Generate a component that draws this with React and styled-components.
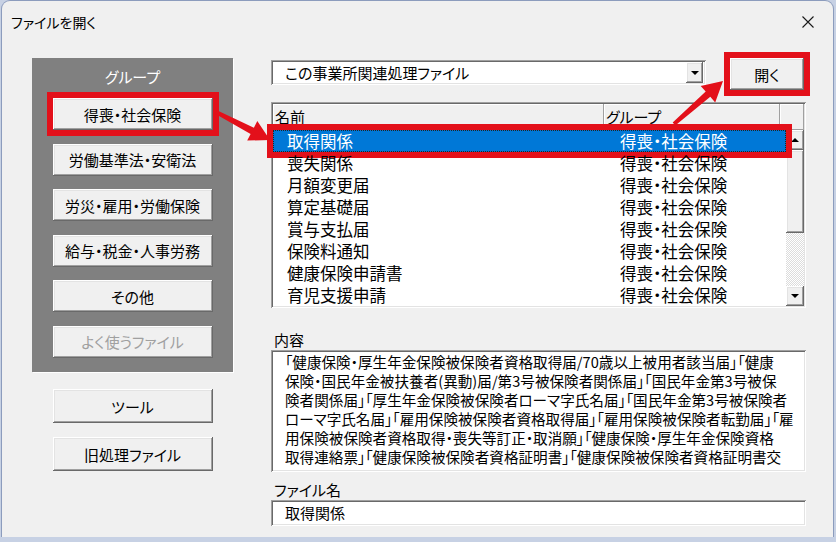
import React from 'react';
import styled, { createGlobalStyle, css } from 'styled-components';

const GlobalStyle = createGlobalStyle`
  html, body {
    margin: 0;
    padding: 0;
  }
  body {
    background: #c7d1e4;
    font-family: "Noto Sans CJK JP", "Noto Sans", sans-serif;
  }
`;

const RED = '#e3101a';

const raised = css`
  box-shadow:
    inset -1px -1px 0 #696969,
    inset 1px 1px 0 #fff,
    inset -2px -2px 0 #a0a0a0,
    inset 2px 2px 0 #e3e3e3;
`;

const sunken = css`
  box-shadow:
    inset 1px 1px 0 #a0a0a0,
    inset -1px -1px 0 #fff,
    inset 2px 2px 0 #696969,
    inset -2px -2px 0 #e3e3e3;
`;

const names = ['取得関係', '喪失関係', '月額変更届', '算定基礎届', '賞与支払届', '保険料通知', '健康保険申請書', '育児支援申請'];

const groups = ['得喪・社会保険', '労働基準法・安衛法', '労災・雇用・労働保険', '給与・税金・人事労務', 'その他'];

const contentLines = [
  '「健康保険・厚生年金保険被保険者資格取得届/70歳以上被用者該当届」「健康',
  '保険・国民年金被扶養者(異動)届/第3号被保険者関係届」「国民年金第3号被保',
  '険者関係届」「厚生年金保険被保険者ローマ字氏名届」「国民年金第3号被保険者',
  'ローマ字氏名届」「雇用保険被保険者資格取得届」「雇用保険被保険者転勤届」「雇',
  '用保険被保険者資格取得・喪失等訂正・取消願」「健康保険・厚生年金保険資格',
  '取得連絡票」「健康保険被保険者資格証明書」「健康保険被保険者資格証明書交',
];

// polygon for a fat annotation arrow from (x1,y1) to the tip (x2,y2)
const arrowPoints = (x1, y1, x2, y2) => {
  const dx = x2 - x1, dy = y2 - y1, len = Math.hypot(dx, dy);
  const ux = dx / len, uy = dy / len, px = -uy, py = ux;
  const headLen = 20, head = 11, tail = 2, neck = 3.5;
  const bx = x2 - ux * headLen, by = y2 - uy * headLen;
  const pts = [
    [x1 + px * tail, y1 + py * tail],
    [bx + px * neck, by + py * neck],
    [bx + px * head, by + py * head],
    [x2, y2],
    [bx - px * head, by - py * head],
    [bx - px * neck, by - py * neck],
    [x1 - px * tail, y1 - py * tail],
  ];
  return pts.map(p => p.map(v => v.toFixed(1)).join(',')).join(' ');
};

export default function App() {
  return (
    <>
      <GlobalStyle />
      <Window>
        <TitleBar>
          <Title>ファイルを開く</Title>
          <CloseIcon viewBox="0 0 12 12">
            <path d="M0.5 0.5 L11.5 11.5 M11.5 0.5 L0.5 11.5" />
          </CloseIcon>
        </TitleBar>

        <Body>
          <LeftColumn>
            <GroupPanel>
              <GroupLabel>グループ</GroupLabel>
              {groups.map((g, i) => (
                <Button key={g} $marked={i === 0}>{g}</Button>
              ))}
              <Button disabled>よく使うファイル</Button>
            </GroupPanel>

            <ToolButtons>
              <Button $h={34}>ツール</Button>
              <Button $h={34}>旧処理ファイル</Button>
            </ToolButtons>
          </LeftColumn>

          <RightColumn>
            <TopRow>
              <Combo>
                <ComboText>この事業所関連処理ファイル</ComboText>
                <ComboButton>
                  <Triangle $down />
                </ComboButton>
              </Combo>
              <Button $w={74} $marked>開く</Button>
            </TopRow>

            <ListBox>
              <ListHeader>
                <HeaderCell $w={331}>名前</HeaderCell>
                <HeaderCell $w={176}>グループ</HeaderCell>
                <HeaderCell $w={24} />
              </ListHeader>
              <ListBody>
                <Rows>
                  {names.map((n, i) => (
                    <Row key={n} $selected={i === 0}>
                      <NameCell>{n}</NameCell>
                      <GroupCell>得喪・社会保険</GroupCell>
                    </Row>
                  ))}
                </Rows>
                <ScrollBar>
                  <ScrollButton><Triangle /></ScrollButton>
                  <Thumb />
                  <Track />
                  <ScrollButton><Triangle $down /></ScrollButton>
                </ScrollBar>
              </ListBody>
            </ListBox>

            <FieldLabel $top={22}>内容</FieldLabel>
            <ContentBox>
              {contentLines.map(line => (
                <ContentLine key={line}>{line}</ContentLine>
              ))}
            </ContentBox>

            <FieldLabel $top={8}>ファイル名</FieldLabel>
            <TextField>取得関係</TextField>
          </RightColumn>
        </Body>

        <Arrows viewBox="0 0 831 536">
          <polygon points={arrowPoints(214, 111, 268, 139)} />
          <polygon points={arrowPoints(672, 123, 721, 80)} />
        </Arrows>
      </Window>
    </>
  );
}

const Window = styled.div`
  position: relative;
  width: 831px;
  height: 536px;
  margin: 1px 0 0 2px;
  background: #f0f0f0;
  border-radius: 8px 8px 0 0;
  box-shadow: 0 0 0 1px #8c9cbd;
  display: flex;
  flex-direction: column;
  font-feature-settings: "palt";
  color: #000;
  overflow: hidden;
`;

const TitleBar = styled.div`
  height: 41px;
  flex-shrink: 0;
  display: flex;
  align-items: center;
  justify-content: space-between;
  padding: 0 19px 0 9px;
`;

const Title = styled.span`
  font-size: 14px;
`;

const CloseIcon = styled.svg`
  width: 12px;
  height: 12px;
  stroke: #1a1a1a;
  stroke-width: 1.1;
  fill: none;
`;

const Body = styled.div`
  display: flex;
  padding-left: 30px;
`;

const LeftColumn = styled.div`
  width: 201px;
  padding-top: 16px;
  display: flex;
  flex-direction: column;
`;

const GroupPanel = styled.div`
  height: 314px;
  box-sizing: border-box;
  background: #808080;
  box-shadow: 1px 1px 0 #fff;
  display: flex;
  flex-direction: column;
  align-items: center;
  gap: 13.5px;
  padding-top: 8px;
`;

const GroupLabel = styled.div`
  color: #fff;
  font-size: 15px;
  line-height: 22px;
  margin-bottom: -3.5px;
`;

const ToolButtons = styled.div`
  margin-top: 17px;
  display: flex;
  flex-direction: column;
  align-items: center;
  gap: 14px;
`;

const Button = styled.button`
  width: ${p => p.$w || 160}px;
  height: ${p => p.$h || 32}px;
  flex-shrink: 0;
  padding: 0;
  border: none;
  background: #f0f0f0;
  ${raised};
  font-family: inherit;
  font-feature-settings: "palt";
  font-size: 15px;
  color: ${p => (p.disabled ? '#a0a0a0' : '#000')};
  ${p => p.$marked && css`
    outline: 6px solid ${RED};
    outline-offset: 0;
  `}
`;

const RightColumn = styled.div`
  width: 535px;
  margin-left: 38px;
  padding-top: 16px;
  display: flex;
  flex-direction: column;
`;

const TopRow = styled.div`
  display: flex;
  align-items: flex-start;
  gap: 24px;
`;

const Combo = styled.div`
  width: 435px;
  height: 25px;
  margin-top: 2px;
  box-sizing: border-box;
  background: #fff;
  ${sunken};
  display: flex;
  align-items: center;
  justify-content: space-between;
  padding: 0 3px 0 14px;
`;

const ComboText = styled.span`
  font-size: 15px;
`;

const ComboButton = styled.div`
  width: 17px;
  height: 21px;
  background: #f0f0f0;
  ${raised};
  display: flex;
  align-items: center;
  justify-content: center;
`;

const Triangle = styled.span`
  width: 0;
  height: 0;
  border-left: 4px solid transparent;
  border-right: 4px solid transparent;
  ${p => (p.$down ? css`border-top: 4px solid #000;` : css`border-bottom: 4px solid #000;`)}
`;

const ListBox = styled.div`
  margin-top: 12px;
  height: 206px;
  box-sizing: border-box;
  padding: 2px;
  background: #fff;
  ${sunken};
  display: flex;
  flex-direction: column;
`;

const ListHeader = styled.div`
  display: flex;
  height: 26px;
`;

const HeaderCell = styled.div`
  width: ${p => p.$w}px;
  box-sizing: border-box;
  background: #f0f0f0;
  box-shadow: inset -1px -1px 0 #a0a0a0, inset 1px 1px 0 #fff;
  font-size: 15px;
  line-height: 26px;
  padding-left: 2px;
`;

const ListBody = styled.div`
  display: flex;
  height: 176px;
`;

const Rows = styled.div`
  flex: 1;
  display: flex;
  flex-direction: column;
`;

const Row = styled.div`
  position: relative;
  height: 22px;
  display: grid;
  grid-template-columns: 331px 1fr;
  font-size: 16.5px;
  line-height: 22px;
  ${p => p.$selected && css`
    background: #0078d7;
    color: #fff;
    outline: 6px solid ${RED};
    &::after {
      content: '';
      position: absolute;
      inset: 0;
      border: 1px dotted #222;
    }
  `}
`;

const NameCell = styled.span`
  padding-left: 14px;
`;

const GroupCell = styled.span`
  padding-left: 16px;
`;

const ScrollBar = styled.div`
  width: 18px;
  display: flex;
  flex-direction: column;
`;

const ScrollButton = styled.div`
  height: 20px;
  background: #f0f0f0;
  ${raised};
  display: flex;
  align-items: center;
  justify-content: center;
`;

const Thumb = styled.div`
  height: 83px;
  background: #f0f0f0;
  ${raised};
`;

const Track = styled.div`
  flex: 1;
  background: repeating-conic-gradient(#fff 0 25%, #dcdcdc 0 50%) 0 0 / 2px 2px;
`;

const FieldLabel = styled.div`
  margin-top: ${p => p.$top}px;
  padding-left: 3px;
  font-size: 15px;
  line-height: 20px;
`;

const ContentBox = styled.div`
  height: 122px;
  box-sizing: border-box;
  padding: 2px 2px 0 14px;
  background: #fff;
  ${sunken};
  overflow: hidden;
`;

const ContentLine = styled.div`
  font-size: 14.6px;
  line-height: 19px;
  white-space: nowrap;
`;

const TextField = styled.div`
  height: 26px;
  box-sizing: border-box;
  padding-left: 14px;
  background: #fff;
  ${sunken};
  font-size: 15px;
  line-height: 26px;
`;

const Arrows = styled.svg`
  position: absolute;
  left: 0;
  top: 0;
  width: 831px;
  height: 536px;
  pointer-events: none;
  fill: ${RED};
`;
